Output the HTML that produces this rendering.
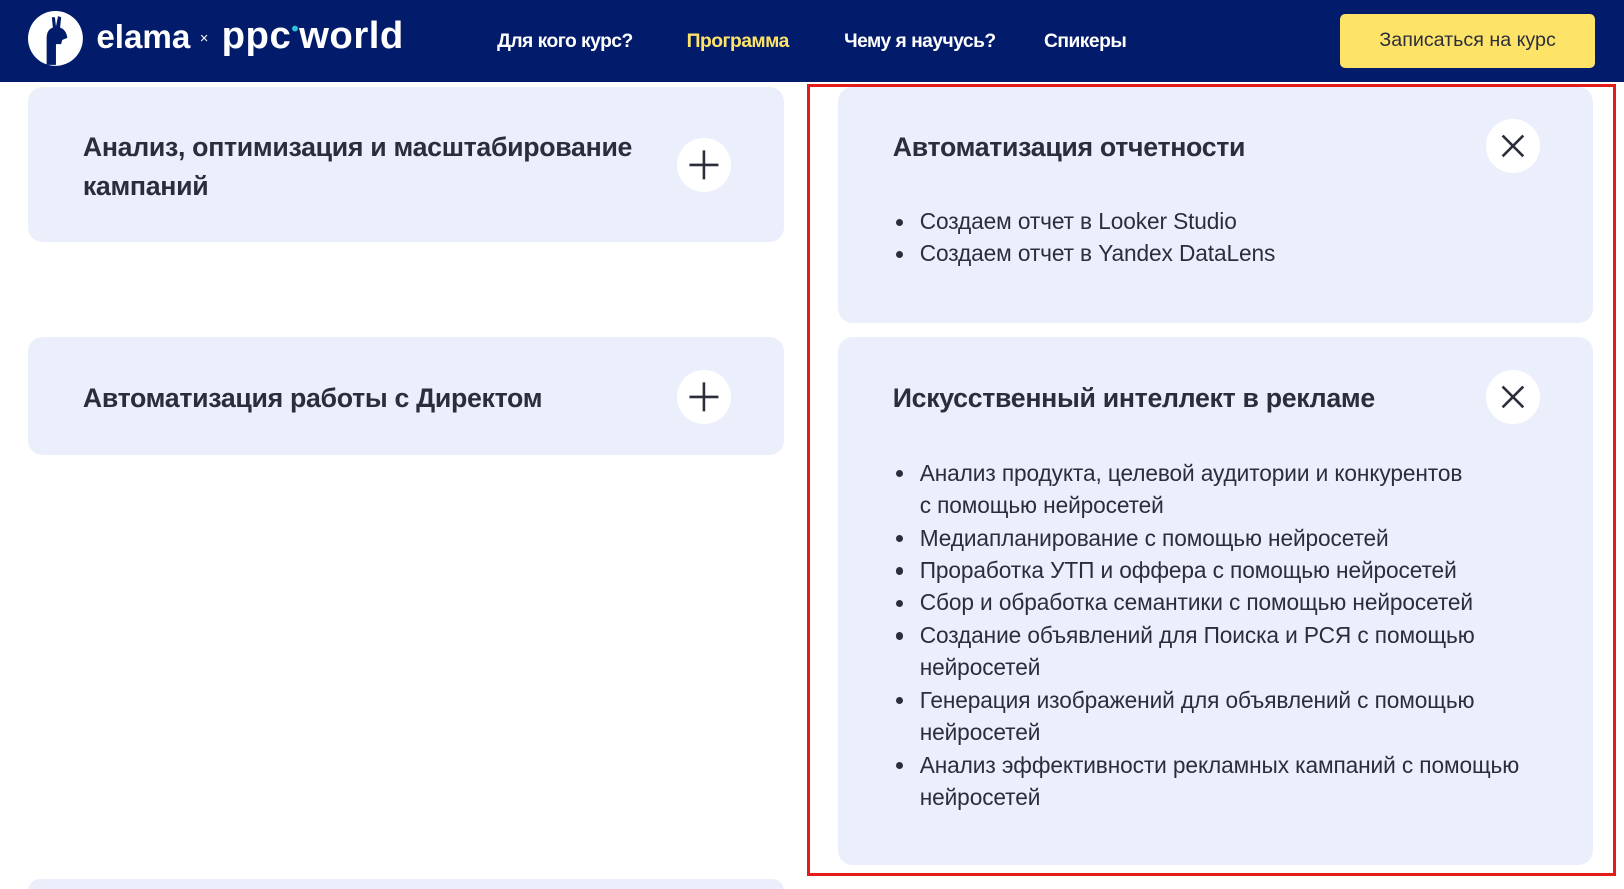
<!DOCTYPE html>
<html><head><meta charset="utf-8"><style>
*{box-sizing:border-box;margin:0;padding:0}
html,body{width:1624px;height:889px;overflow:hidden;background:#fff}
body{font-family:"Liberation Sans","DejaVu Sans",sans-serif;color:#2b2e3a}
.w{position:relative;width:1568px;height:858px;overflow:hidden;zoom:1.03571}
.hdr{position:absolute;left:0;top:0;width:1568px;height:79px;background:#031b6b}
.nav{position:absolute;top:30px;color:#fff;font-size:18.6px;font-weight:bold;letter-spacing:-0.5px}
.btn{position:absolute;left:1294px;top:14px;width:246px;height:52px;background:#fde469;border-radius:5px;color:#2b2e3a;font-size:19px;text-align:center;line-height:52px}
.card{position:absolute;background:#ebeffc;border-radius:14px}
.t{position:absolute;font-size:25.8px;font-weight:bold;line-height:37px;letter-spacing:-0.3px}
.ic{position:absolute;width:52px;height:52px;border-radius:50%;background:#fff}
ul{position:absolute;list-style:none;font-size:21.9px;line-height:31.3px;letter-spacing:-0.1px}
li{position:relative;padding-left:26px}
li:before{content:"";position:absolute;left:3px;top:13px;width:7px;height:7px;border-radius:50%;background:#2b2e3a}
.red{position:absolute;left:779px;top:81px;width:781px;height:765px;border:3px solid #e31b1b}
</style></head><body><div class="w">
<div class="hdr">
<svg style="position:absolute;left:27px;top:11px" width="53" height="53" viewBox="0 0 53 53"><circle cx="26.5" cy="26.5" r="26.5" fill="#fff"/><path d="M18 52 L18 26 Q18 18 24 16 L23 6 L26 6 L27 15 L29 5 L32 6 L31 16 Q37 18 38 26 L33 28 L32 32 L27 32 L27 52 Z" fill="#031b6b"/></svg>
<div style="position:absolute;left:93px;top:18px;color:#fff;font-size:32px;font-weight:bold">elama</div>
<div style="position:absolute;left:193px;top:30px;color:#fff;font-size:14px">×</div>
<div style="position:absolute;left:214px;top:14px;color:#fff;font-size:37px;font-weight:bold;letter-spacing:0.5px">ppc<span style="color:#2cc3d6;font-size:20px;vertical-align:12px">•</span>world</div>
<div class="nav" style="left:480px">Для кого курс?</div>
<div class="nav" style="left:663px;color:#fde469">Программа</div>
<div class="nav" style="left:815px">Чему я научусь?</div>
<div class="nav" style="left:1008px">Спикеры</div>
<div class="btn">Записаться на курс</div>
</div>

<div class="card" style="left:27px;top:84px;width:730px;height:150px"></div>
<div class="t" style="left:80px;top:124px">Анализ, оптимизация и масштабирование<br>кампаний</div>
<div class="ic" style="left:654px;top:133px"><svg width="52" height="52"><path d="M26 12V40M12 26H40" stroke="#2b2e3a" stroke-width="2.5"/></svg></div>

<div class="card" style="left:27px;top:325px;width:730px;height:114px"></div>
<div class="t" style="left:80px;top:366px">Автоматизация работы с Директом</div>
<div class="ic" style="left:654px;top:357px"><svg width="52" height="52"><path d="M26 12V40M12 26H40" stroke="#2b2e3a" stroke-width="2.5"/></svg></div>

<div class="card" style="left:27px;top:849px;width:730px;height:11px;border-radius:14px 14px 0 0"></div>

<div class="card" style="left:809px;top:84px;width:729px;height:228px"></div>
<div class="t" style="left:862px;top:124px">Автоматизация отчетности</div>
<div class="ic" style="left:1435px;top:115px"><svg width="52" height="52"><path d="M16 16L36 36M36 16L16 36" stroke="#2b2e3a" stroke-width="2.5"/></svg></div>
<ul style="left:862px;top:198px"><li>Создаем отчет в Looker Studio</li><li>Создаем отчет в Yandex DataLens</li></ul>

<div class="card" style="left:809px;top:325px;width:729px;height:510px"></div>
<div class="t" style="left:862px;top:366px">Искусственный интеллект в рекламе</div>
<div class="ic" style="left:1435px;top:357px"><svg width="52" height="52"><path d="M16 16L36 36M36 16L16 36" stroke="#2b2e3a" stroke-width="2.5"/></svg></div>
<ul style="left:862px;top:441px;width:640px">
<li>Анализ продукта, целевой аудитории и конкурентов<br>с помощью нейросетей</li>
<li>Медиапланирование с помощью нейросетей</li>
<li>Проработка УТП и оффера с помощью нейросетей</li>
<li>Сбор и обработка семантики с помощью нейросетей</li>
<li>Создание объявлений для Поиска и РСЯ с помощью<br>нейросетей</li>
<li>Генерация изображений для объявлений с помощью<br>нейросетей</li>
<li>Анализ эффективности рекламных кампаний с помощью<br>нейросетей</li>
</ul>
<div class="red"></div>
</div></body></html>
